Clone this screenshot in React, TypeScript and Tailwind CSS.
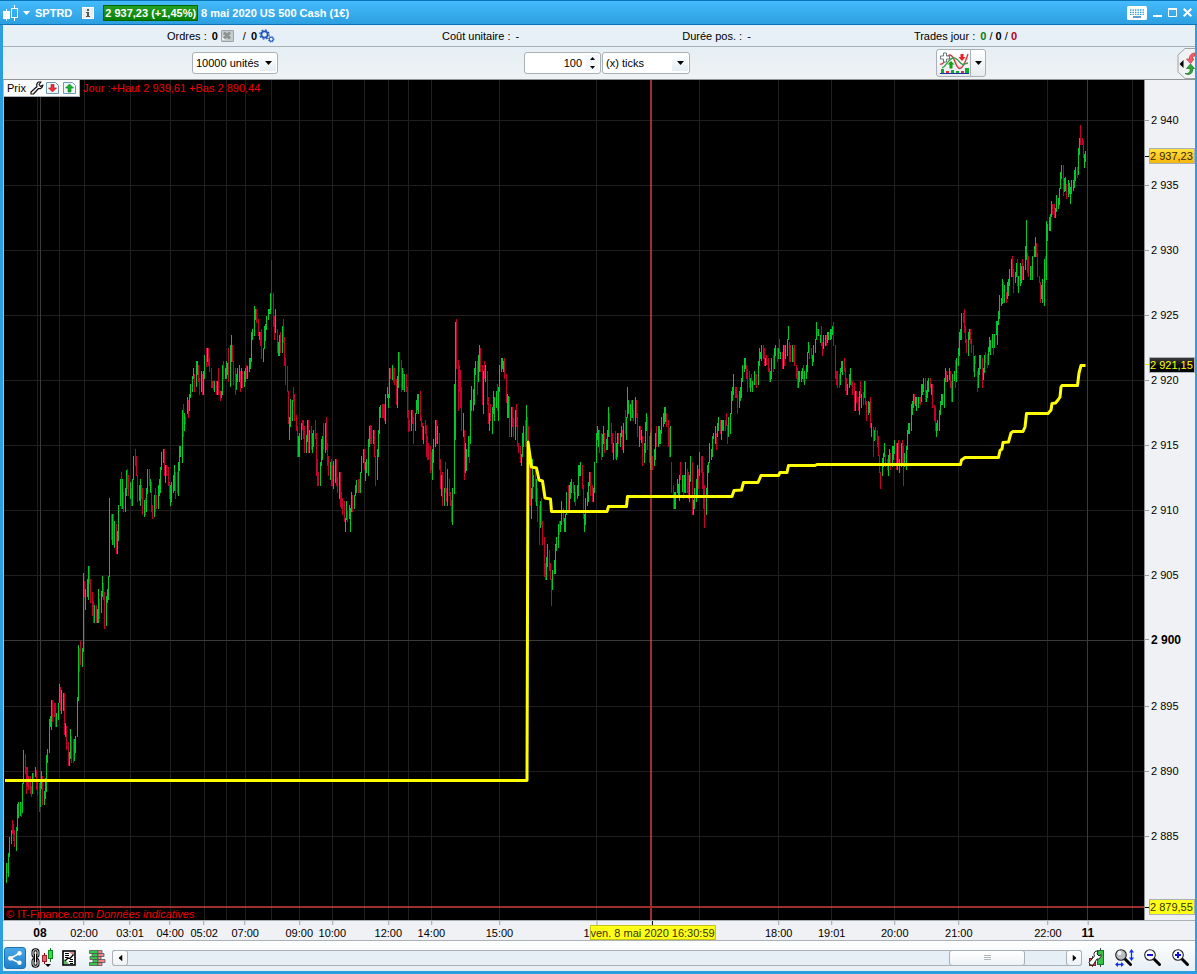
import React from "react";

/* One entry per bar: direction (g = up, r = down) and x, then high and low. */
const BARS = `g6,863,883 r7,863,873 g8,853,877 g9,837,857 g11,830,844 r12,820,834 r13,824,841 r14,830,847 g16,827,851 g17,804,831 g18,802,818 g20,802,816 r21,802,817 g22,783,813 g23,750,784 r25,754,774 r26,767,794 r27,767,787 r28,776,790 r30,776,794 r31,786,797 g32,773,794 r33,773,779 g35,767,777 r36,770,790 r37,782,796 r39,783,812 g40,781,807 g41,771,789 r42,776,805 g44,791,805 g45,778,799 g46,755,792 g47,749,763 g49,719,753 g50,716,727 g51,700,730 r52,700,722 r54,703,717 r55,703,727 g56,713,727 g58,703,720 g59,684,703 r60,687,711 g61,690,714 g63,693,711 r64,693,735 g65,723,737 r66,726,750 r68,742,766 g69,752,766 g70,729,759 r71,736,763 r73,739,763 g74,739,761 g75,736,753 g77,697,737 g78,645,701 r79,648,672 r80,641,665 g82,648,667 g83,573,652 r84,581,597 g85,589,610 g87,579,597 g88,566,600 r89,566,584 r90,579,603 r92,592,616 r93,601,623 g94,605,623 r96,605,623 g97,609,623 g98,589,623 r99,599,619 g101,591,613 g102,576,597 r103,583,600 r104,592,629 g106,596,626 g107,589,603 g108,576,600 g109,498,577 r111,514,540 g112,514,545 r113,514,545 g114,521,548 r116,524,554 g117,531,554 g118,505,541 g120,479,506 r121,472,509 g122,479,509 r123,492,512 g125,488,512 g126,470,496 r127,469,489 r128,475,496 g130,482,499 r131,488,506 g132,479,506 g133,456,480 r135,449,466 r136,456,476 r137,475,502 g139,485,501 g140,479,506 r141,485,499 r142,488,515 g144,500,517 r145,498,515 g146,488,512 g147,469,494 r149,469,486 g150,479,493 r151,482,512 r152,505,519 g154,495,517 r155,488,512 r156,495,509 g158,485,509 g159,479,496 g160,467,493 g161,452,470 g163,449,463 r164,449,476 g165,465,483 r166,465,476 r168,467,486 r169,482,499 g170,485,506 g171,482,502 g173,475,493 g174,465,491 r175,472,499 r177,472,494 g178,462,496 g179,446,471 g180,446,457 g182,410,463 r183,404,437 g184,413,431 r185,417,424 g187,397,414 r188,400,418 g189,394,411 g190,384,398 g192,376,392 g193,368,379 r194,374,392 g196,361,387 g197,361,375 r198,365,382 r199,378,395 g201,371,392 r202,374,395 g203,371,395 g204,355,379 r206,348,367 g207,348,362 r208,348,366 r209,358,372 r211,368,388 r212,381,388 r213,381,390 g214,381,392 r216,381,395 g217,381,395 r218,368,395 r220,391,401 g221,391,398 g222,365,395 r223,361,379 g225,368,379 g226,361,379 g227,363,375 r228,348,382 g230,345,387 g231,335,362 r232,345,362 r233,361,385 r235,368,395 g236,374,390 g237,368,382 g239,365,382 r240,371,392 g241,368,388 r242,371,388 g244,371,387 g245,368,382 r246,365,379 g247,366,379 g249,358,372 g250,358,369 g251,332,362 g252,329,340 g254,306,336 g255,309,320 r256,309,323 r258,319,336 g259,332,340 r260,332,346 r261,329,359 g263,348,362 g264,326,349 g265,324,341 g266,316,330 g268,309,320 g269,309,314 g270,293,314 r271,260,310 r273,293,327 r274,316,340 g275,309,333 r277,329,353 g278,342,356 g279,335,356 r280,332,353 g282,326,353 r283,319,343 r284,337,366 r285,358,385 r287,366,392 r288,391,424 g289,417,440 g290,399,427 g292,400,421 r293,387,402 r294,394,421 r296,415,431 r297,426,457 g298,436,457 g299,433,457 g301,423,440 r302,420,430 r303,420,439 r304,426,453 g306,435,453 g307,420,442 r308,420,453 g309,430,453 r311,426,450 g312,433,453 g313,430,447 r315,420,439 r316,433,476 r317,459,486 r318,472,486 g320,462,486 g321,439,466 g322,436,460 r323,423,449 g325,423,453 r326,417,450 r327,443,466 r328,456,476 g330,462,480 r331,459,486 r332,465,486 g333,461,489 g335,459,483 r336,459,486 r337,477,493 g339,472,499 r340,472,507 r341,492,509 r342,498,515 r344,501,522 g345,518,532 g346,501,520 r347,511,522 g349,505,519 g350,508,532 g351,492,512 r352,495,512 g354,495,509 g355,485,496 g356,480,493 r358,479,493 r359,479,493 g360,472,493 g361,456,473 g363,449,463 r364,449,470 g365,462,481 g366,459,473 g368,439,476 g369,426,447 r370,425,444 r371,426,444 g373,430,444 r374,430,457 r375,456,486 g377,449,480 g378,430,457 g379,407,434 g380,405,418 r382,404,418 r383,404,418 r384,404,421 g385,394,424 g387,387,398 g388,394,408 g389,368,398 r390,368,379 g392,365,380 r393,368,382 r394,368,385 r396,379,405 g397,376,408 g398,352,388 r399,352,372 r401,360,392 g402,368,390 r403,371,390 g404,374,392 r406,374,392 r407,387,418 r408,410,432 r409,420,431 g411,410,431 r412,410,424 r413,417,444 g415,413,431 g416,400,414 g417,394,410 g418,394,414 r420,391,421 r421,417,427 r422,423,440 g423,426,444 r425,420,434 r426,425,457 r427,436,460 r428,443,460 r430,446,473 r431,452,470 g432,449,480 g433,439,463 g435,420,447 r436,420,444 g437,426,444 r439,433,470 r440,459,489 g441,475,496 r442,472,506 g444,488,506 r445,462,493 r446,488,502 g447,469,506 r449,479,496 r450,492,506 r451,500,522 g452,488,525 g454,384,494 g455,322,440 r456,319,369 r458,360,411 r459,365,392 r460,370,408 r461,387,431 g463,413,437 r464,430,480 g465,443,473 g466,449,471 g468,436,457 r469,436,463 g470,400,444 g471,386,411 g473,389,411 g474,368,405 g475,361,375 r477,361,395 g478,355,382 g479,345,372 r480,348,372 r482,365,405 g483,371,414 r484,361,379 g485,365,382 r487,371,405 r488,397,424 g489,413,431 r490,404,421 g492,407,434 g493,391,414 g494,397,421 g496,391,408 r497,384,411 g498,387,421 g499,365,392 g501,358,372 g502,358,369 g503,361,372 r504,358,379 r506,374,403 g507,394,418 g508,396,418 r509,397,437 g511,407,437 r512,407,427 r513,418,437 g515,410,440 r516,404,427 r517,417,447 r518,443,453 r520,446,463 g521,454,466 g522,433,457 g523,426,447 r525,420,447 g526,405,441 r527,417,440 r528,426,441 r530,467,506 g531,488,519 g532,459,499 g533,475,487 r535,470,502 g536,479,506 r537,488,522 r539,505,545 g540,501,528 r541,498,525 r542,521,545 r544,537,577 r545,563,580 g546,557,580 g547,544,567 r549,550,571 r550,563,580 r551,579,606 g552,570,590 g554,560,574 g555,544,574 g556,537,551 g558,524,548 r559,521,535 g560,521,532 g561,501,525 r563,508,522 g564,518,532 g565,514,532 g566,492,515 r568,485,510 g569,485,510 g570,482,499 g571,479,493 r573,482,493 g574,485,502 r575,492,506 g577,485,499 g578,465,496 g579,465,476 g580,462,476 r582,465,489 r583,485,519 g584,514,532 g585,498,525 g587,492,506 g588,482,502 g589,472,486 r590,472,496 r592,485,502 g593,488,502 g594,462,493 g596,433,463 g597,426,440 g598,430,447 r599,430,453 r601,433,460 g602,434,457 g603,426,444 r604,433,453 g606,439,450 g607,430,450 g608,407,437 r609,413,437 r611,423,444 r612,433,453 g613,443,460 r615,431,459 g616,443,460 g617,433,457 r618,433,444 g620,433,447 g621,426,437 r622,430,450 g623,423,453 r625,410,434 g626,417,440 g627,387,418 g628,400,414 g630,404,421 r631,400,418 g632,400,418 r633,410,421 g635,397,424 r636,400,418 r637,413,437 g639,426,447 r640,426,440 g641,430,443 r642,436,466 g644,443,463 g645,422,453 g646,413,431 r647,417,450 r649,436,463 g650,433,470 r651,430,470 r652,456,470 g654,449,466 g655,433,460 r656,426,447 g658,426,447 g659,426,444 g660,430,444 g661,417,434 g663,413,427 g664,407,424 g665,407,422 r666,413,427 r668,420,447 r669,428,457 g670,426,457 r671,462,493 r673,485,509 g674,492,509 g675,492,509 g677,479,493 g678,484,495 g679,475,501 r680,462,480 g682,475,492 r683,475,499 g684,475,493 g685,462,493 r687,469,493 r688,472,499 g689,475,502 g690,456,482 r692,462,515 g693,500,515 g694,488,509 g696,479,502 g697,465,498 r698,469,489 g699,452,476 r701,456,473 r702,456,489 r703,472,509 r704,485,528 g706,488,515 g707,465,495 g708,462,473 g709,443,463 g711,449,460 g712,436,457 g713,433,439 g715,426,444 r716,433,450 g717,423,437 g718,417,431 r720,420,434 g721,420,440 g722,420,431 g723,420,431 r725,420,431 r726,413,426 r727,425,444 g728,417,437 g730,413,434 g731,391,414 g732,387,401 g733,374,395 r735,387,398 r736,387,398 r737,394,414 g739,391,408 g740,387,401 g741,378,398 g742,365,382 g744,358,372 g745,358,369 r746,365,379 r747,369,392 r749,371,388 g750,378,392 r751,374,388 g752,381,392 g754,371,385 r755,374,385 r756,374,388 g758,361,385 g759,348,366 g760,352,359 g761,345,361 r763,345,359 r764,348,366 g765,358,366 r766,355,365 r768,358,372 r769,368,382 g770,371,382 g771,358,379 r773,355,372 g774,348,369 g775,345,356 r777,348,362 g778,348,359 r779,339,353 g780,352,359 r782,352,369 g783,345,369 r784,345,366 g785,345,359 g787,339,356 g788,326,340 r789,342,362 r790,345,362 g792,345,362 r793,348,362 r794,345,366 r796,365,379 r797,368,388 g798,371,388 g799,371,382 g801,371,382 g802,368,379 r803,365,382 g804,371,385 g806,365,379 g807,352,372 g808,342,353 r809,345,359 r811,348,359 g812,355,366 g813,345,362 g815,339,353 g816,322,340 r817,329,336 g818,329,336 g820,335,343 r821,326,346 r822,342,356 g823,335,349 g825,335,346 r826,335,346 g827,332,343 g828,332,340 g830,329,340 g831,329,339 g832,326,335 r833,322,346 r835,345,379 r836,371,385 r837,371,388 r839,374,388 g840,368,385 g841,361,372 g842,361,375 r844,358,372 r845,368,391 r846,378,395 g847,384,395 g849,374,388 g850,368,385 r851,380,386 r852,381,395 r854,383,411 g855,391,411 r856,391,403 r858,397,411 g859,391,415 r860,381,398 g861,394,408 r863,392,405 g864,381,398 r865,381,405 r866,401,421 g868,401,415 g869,402,413 r870,397,428 g871,423,437 r873,427,457 g874,430,441 r875,427,440 r877,430,447 r878,436,456 r879,455,473 r880,472,489 g882,458,476 g883,453,467 g884,443,457 r885,455,467 r887,459,470 g888,455,476 g889,449,466 r890,453,470 g892,446,467 g893,446,460 g894,440,454 r896,443,470 g897,443,470 r898,440,464 g899,459,473 g901,443,467 r902,440,463 r903,446,486 g904,453,467 g906,446,470 g907,430,450 g908,423,434 g909,423,434 g911,404,431 g912,401,415 g913,394,408 r914,394,404 g915,397,406 g916,397,411 g918,397,408 r919,397,404 r920,397,405 g921,384,402 g922,384,395 g923,378,392 r925,378,402 g926,390,402 g927,381,398 g928,378,392 r930,378,388 g931,384,395 r932,384,408 r934,405,421 r935,407,431 g936,423,437 g937,420,431 g939,410,431 g940,401,415 g941,394,405 g942,394,405 g944,378,408 g945,368,382 r946,371,382 g947,375,382 g949,368,380 r950,371,388 r951,381,402 g952,374,402 g954,371,381 r955,360,388 g956,358,382 g958,348,366 g959,332,356 g960,329,340 g961,313,340 r963,313,323 r964,309,333 r965,326,343 r966,339,353 g968,332,356 g969,329,340 r970,329,344 r971,339,353 r973,345,372 g974,356,377 r975,355,364 r977,371,392 g978,368,388 g979,355,375 g980,355,369 r982,358,388 g983,368,380 g984,355,373 r985,352,363 r987,354,368 g988,347,365 g989,337,352 g990,340,355 g992,334,348 r993,334,355 g994,334,348 g996,321,335 g997,321,345 g998,311,325 g999,295,319 g1001,298,306 g1002,279,304 r1003,282,303 g1004,285,303 r1006,292,303 g1007,282,299 g1008,279,296 g1009,269,286 g1011,259,277 r1012,256,277 r1013,269,293 g1015,272,283 g1016,263,277 r1017,259,286 g1018,276,293 g1020,263,286 g1021,266,283 r1022,259,280 g1023,266,280 g1025,246,270 g1026,220,260 r1027,253,273 r1028,256,277 g1030,266,280 r1031,266,280 g1032,256,280 g1034,246,257 g1035,237,257 r1036,243,257 r1037,253,277 r1039,276,283 r1040,282,303 g1041,285,299 g1042,279,303 g1044,259,306 r1045,256,283 g1046,221,280 g1047,224,241 g1049,217,231 g1050,214,231 g1051,201,217 r1052,204,215 r1054,204,218 g1055,208,218 g1056,195,212 g1058,198,209 g1059,188,205 g1060,172,189 g1061,165,179 r1063,165,196 g1064,178,192 g1065,177,191 r1066,184,199 g1068,180,197 g1069,183,194 g1070,187,204 g1071,180,194 g1073,180,191 g1074,170,188 g1075,167,181 r1077,167,178 g1078,148,175 g1079,138,155 r1080,125,145 r1082,138,145 r1083,141,158 g1084,154,168 g1085,151,162`;

const PLOT = { left: 4, top: 80, width: 1140, height: 840 };

function barPath(kind: string): string {
  return BARS.split(" ")
    .filter((b) => b[0] === kind)
    .map((b) => {
      const [x, hi, lo] = b.slice(1).split(",").map(Number);
      return `M${x + 0.5} ${hi}V${lo}`;
    })
    .join("");
}
const UP = barPath("g");
const DOWN = barPath("r");

const INDICATOR =
  "M5 780.5L527 780.5L528 442L531.5 467L536.5 468L539 480L542.5 481L545 498L550.5 499L551.5 511.5L607 511.5L608.5 506.5L626.5 506.5L627.5 496.5L732 496.5L734 490.5L741.5 490L743.5 482.5L758 482.5L761 475.5L778.5 475.5L780 472.5L787 472.5L788.5 465.5L815 465.5L817 464.5L960.5 464.5L961.5 460L965 457.5L998.5 457.5L1000 450.5L1002 449L1003 442.5L1008.5 442L1011 433L1013 431.5L1023 431.5L1025 427L1026.5 413.5L1048 413.5L1051 410L1052 403.5L1055.5 403L1058 400L1060 397L1061 387L1062 385.5L1077.5 385.5L1079 373L1081 365.5L1085.5 365.5";

const GRID_X = [37, 59, 84, 130, 170, 204, 226, 245, 271, 299, 332, 364, 388, 408, 431, 499, 596, 699, 778, 831, 894, 958, 1047, 1132];
const GRID_Y = [120, 185, 250, 315, 380, 445, 510, 575, 706, 771, 836];

const PRICES = [
  { y: 120, t: "2 940" },
  { y: 185, t: "2 935" },
  { y: 250, t: "2 930" },
  { y: 315, t: "2 925" },
  { y: 380, t: "2 920" },
  { y: 445, t: "2 915" },
  { y: 510, t: "2 910" },
  { y: 575, t: "2 905" },
  { y: 640, t: "2 900", strong: true },
  { y: 706, t: "2 895" },
  { y: 771, t: "2 890" },
  { y: 836, t: "2 885" },
];

const BADGES = [
  { y: 156, t: "2 937,23", box: "bg-linear-to-b from-[#ffe23a] to-[#f5b60a] text-[#3a2600]", tick: "bg-black" },
  { y: 365, t: "2 921,15", box: "bg-linear-to-b from-[#3c3c3c] to-black text-[#ffff00]", tick: "bg-[#f0e800]" },
  { y: 907, t: "2 879,55", box: "bg-[#ffff1a] text-[#333300]", tick: "bg-black" },
];

const TIMES = [
  { x: 40, t: "08", strong: true },
  { x: 84, t: "02:00" },
  { x: 130, t: "03:01" },
  { x: 170, t: "04:00" },
  { x: 204, t: "05:02" },
  { x: 245, t: "07:00" },
  { x: 299, t: "09:00" },
  { x: 332, t: "10:00" },
  { x: 388, t: "12:00" },
  { x: 431, t: "14:00" },
  { x: 499, t: "15:00" },
  { x: 586, t: "1", bare: true },
  { x: 596, t: "" },
  { x: 778, t: "18:00" },
  { x: 831, t: "19:01" },
  { x: 894, t: "20:00" },
  { x: 958, t: "21:00" },
  { x: 1047, t: "22:00" },
  { x: 1087, t: "11", strong: true },
];

const fromLeft = (x: number) => `${((x - PLOT.left) / PLOT.width) * 100}%`;
const fromTop = (y: number) => `${((y - PLOT.top) / PLOT.height) * 100}%`;

function Caret({ className = "" }: { className?: string }) {
  return (
    <svg className={`h-[4px] w-[7px] ${className}`} viewBox="0 0 7 4" aria-hidden="true">
      <path d="M0 0H7L3.5 4Z" fill="currentColor" />
    </svg>
  );
}

function TitleBar() {
  return (
    <header className="flex h-[25px] shrink-0 items-center border-y border-t-[#0875bb] border-b-[#0875bb] bg-linear-to-b from-[#45bbfb] to-[#2b9fe0] pr-[5px] text-white">
      <svg className="ml-[3px] h-[16px] w-[16px]" viewBox="0 0 16 16" aria-hidden="true">
        <path d="M3.500 4V15.500" stroke="#fff" />
        <rect x="0" y="6" width="7" height="8" fill="#fff" />
        <path d="M11.500 0V3M11.500 13V16" stroke="#fff" />
        <rect x="8.500" y="3.500" width="6" height="9" fill="none" stroke="#fff" />
      </svg>
      <button type="button" aria-label="Menu" className="ml-[4px] flex w-[7px] items-center">
        <Caret />
      </button>
      <h1 className="ml-[5px] text-[11px] font-bold">SPTRD</h1>
      <button type="button" aria-label="Informations" className="ml-[10px] flex h-[12px] w-[12px] items-center justify-center border border-white bg-[#e9eef1]">
        <svg className="h-[8px] w-[6px]" viewBox="0 0 6 8" aria-hidden="true">
          <path d="M2 0H4V2H2ZM1 3H4V7H5V8H1V7H2V4H1Z" fill="#555" />
        </svg>
      </button>
      <span className="ml-[9px] flex h-[16px] items-center border border-[#006400] bg-linear-to-b from-[#22a022] to-[#078007] px-px text-[11px] font-bold whitespace-nowrap">
        2 937,23 (+1,45%)
      </span>
      <span className="ml-[3px] text-[11px] font-bold whitespace-nowrap">8 mai 2020 US 500 Cash (1€)</span>
      <div className="ml-auto flex items-center">
        <button type="button" aria-label="Clavier" className="mt-px flex">
          <svg className="h-[14px] w-[20px]" viewBox="0 0 20 14" aria-hidden="true">
            <rect width="20" height="14" rx="1.500" fill="#fff" />
            <path d="M3 4H17M3 6.500H17" stroke="#2b9fe0" strokeWidth="1.400" strokeDasharray="1.400 1.100" />
            <path d="M3 8.500H17" stroke="#2b9fe0" strokeWidth="1" strokeDasharray="1.400 1.100" />
            <path d="M6 11H14" stroke="#2b7fc0" strokeWidth="1.500" />
          </svg>
        </button>
        <button type="button" aria-label="Réduire" className="ml-[6px] flex">
          <svg className="h-[10px] w-[9px]" viewBox="0 0 9 10" aria-hidden="true">
            <path d="M0 8H9" stroke="#fff" strokeWidth="2" />
          </svg>
        </button>
        <button type="button" aria-label="Agrandir" className="ml-[6px] flex">
          <svg className="h-[10px] w-[9px]" viewBox="0 0 9 10" aria-hidden="true">
            <path d="M.5 1.500V8.500H8.500V1.500" stroke="#fff" fill="none" />
            <path d="M0 1H9" stroke="#fff" strokeWidth="2" />
          </svg>
        </button>
        <button type="button" aria-label="Fermer" className="ml-[6px] flex">
          <svg className="h-[9px] w-[9px]" viewBox="0 0 9 9" aria-hidden="true">
            <path d="M.7.7L8.300 8.300M8.300.7L.7 8.300" stroke="#fff" strokeWidth="2" />
          </svg>
        </button>
      </div>
    </header>
  );
}

function Gear({ cx, cy, r }: { cx: number; cy: number; r: number }) {
  return (
    <g fill="none" stroke="#1d56b8">
      <circle cx={cx} cy={cy} r={r} strokeWidth={r * 0.55} />
      <circle cx={cx} cy={cy} r={r * 1.45} strokeWidth={r * 0.4} strokeDasharray={`${r * 0.57} ${r * 0.569}`} />
    </g>
  );
}

function StatusRow() {
  return (
    <div className="flex h-[22px] shrink-0 items-center justify-between border-b border-[#a9b0b6] bg-[#e8f0f7] pr-[178px] pl-[164px] whitespace-nowrap">
      <div className="flex items-center pr-[4px]">
        <span>Ordres :</span>
        <b className="ml-[5px]">0</b>
        <button type="button" aria-label="Annuler les ordres" className="ml-[3px] flex h-[12px] w-[13px] items-center justify-center rounded-[1px] border border-[#9da3a7] bg-[#c6caca]">
          <svg className="h-[9px] w-[10px]" viewBox="0 0 10 9" aria-hidden="true">
            <path d="M2 1.500L8 7.500M8 1.500L2 7.500" stroke="#8b9092" strokeWidth="2.600" />
            <path d="M0 9V6L4 9Z" fill="#eee" />
          </svg>
        </button>
        <span className="ml-[9px]">/</span>
        <b className="ml-[5px]">0</b>
        <button type="button" aria-label="Réglages des ordres" className="ml-[2px] flex">
          <svg className="h-[14px] w-[16px]" viewBox="0 0 16 14" aria-hidden="true">
            <Gear cx={5.5} cy={5.5} r={3.2} />
            <Gear cx={12.2} cy={10.2} r={2} />
          </svg>
        </button>
      </div>
      <div>
        Coût unitaire : <span className="ml-[2px]">-</span>
      </div>
      <div>
        Durée pos. : <span className="ml-[2px]">-</span>
      </div>
      <div>
        Trades jour : <b className="ml-[2px] text-[#0c7a12]">0</b> / <b>0</b> / <b className="text-[#b00020]">0</b>
      </div>
    </div>
  );
}

const FIELD = "h-[22px] rounded-[3px] border border-[#a9b0b6] bg-white text-[11px] text-black outline-none";

function Select({ label, value, width }: { label: string; value: string; width: string }) {
  return (
    <span className={`relative flex ${width}`}>
      <select aria-label={label} defaultValue={value} className={`${FIELD} w-full appearance-none pl-[3px]`}>
        <option>{value}</option>
      </select>
      <span className="pointer-events-none absolute top-[3px] right-[2px] flex h-[16px] w-[16px] items-center justify-center bg-linear-to-b from-white to-[#e4edf3]">
        <Caret />
      </span>
    </span>
  );
}

function SettingsRow() {
  return (
    <div className="flex h-[33px] shrink-0 items-center border-b border-[#8f9496] bg-linear-to-b from-[#e5eff5] to-[#f0f1f3]">
      <div className="flex flex-1 items-center justify-between pr-[191px] pl-[189px]">
        <Select label="Nombre d'unités" value="10000 unités" width="w-[86px]" />
        <div className="flex gap-px">
          <span className="relative flex w-[77px]">
            <input aria-label="Nombre de ticks" type="text" defaultValue="100" className={`${FIELD} w-full pr-[18px] text-right`} />
            <span className="absolute top-[3px] right-[2px] flex h-[16px] w-[14px] flex-col items-center justify-between bg-[#f4f8fa] py-[2px]">
              <button type="button" aria-label="Augmenter" className="flex">
                <svg className="h-[3px] w-[5px]" viewBox="0 0 5 3" aria-hidden="true">
                  <path d="M0 3H5L2.500 0Z" />
                </svg>
              </button>
              <button type="button" aria-label="Diminuer" className="flex">
                <svg className="h-[3px] w-[5px]" viewBox="0 0 5 3" aria-hidden="true">
                  <path d="M0 0H5L2.500 3Z" />
                </svg>
              </button>
            </span>
          </span>
          <Select label="Unité de temps" value="(x) ticks" width="w-[88px]" />
        </div>
        <div className="flex h-[28px] w-[50px] overflow-hidden rounded-[3px] border border-[#a9b0b6] bg-linear-to-b from-white to-[#e8ecef]">
          <button type="button" aria-label="Ajouter un indicateur" className="flex flex-1 items-center justify-center border-r border-[#a9b0b6]">
            <svg className="h-[24px] w-[30px]" viewBox="0 0 30 24" aria-hidden="true">
              <path d="M2 14C7 14 7 5 13 5C18 5 17 15 21 15C25 15 25 10 29 9L29 4C24 13 22 19 19 17C14 14 15 2 10 5C7 7 5 16 2 14Z" fill="#f5cfcf" />
              <path d="M1 13C6 15 7 4 11 4C16 4 16 18 21 17.500C25 17 27 8 29 3" fill="none" stroke="#c33c46" strokeWidth="1.300" />
              <path d="M3 17C8 15 9 8 14 7C19 6 21 14 24 13.500C27 13 27 12 29 12" fill="none" stroke="#3c9a45" strokeWidth="1.300" />
              <path d="M4.500 2H7.500V5H10.500V8H7.500V11H4.500V8H1.500V5H4.500Z" fill="#fff" stroke="#6b787c" />
              <path d="M21.500 3H24.500V6H26.500L23 10L19.500 6H21.500Z" fill="#ee2020" />
              <path d="M10.500 17.500V13.500H8.500L12 10L15.500 13.500H13.500V17.500Z" fill="#12a012" />
              <path d="M2 18H5V22H2ZM12 19H15V22H12ZM17 20H20V22H17ZM26 17H30V22H26Z" fill="#12a830" />
              <path d="M7 20H10V22H7ZM22 20H25V22H22Z" fill="#e03038" />
              <path d="M1 22.500H30" stroke="#2030a0" strokeWidth="1" />
            </svg>
          </button>
          <button type="button" aria-label="Liste des indicateurs" className="flex w-[14px] items-center justify-center">
            <Caret />
          </button>
        </div>
      </div>
      <button type="button" aria-label="Panneau latéral" className="flex">
        <svg className="h-[31px] w-[18px]" viewBox="0 0 18 31" aria-hidden="true">
          <path d="M18 .5H8L1 7V24L8 30.500H18" fill="#f0f2f4" stroke="#9da3a7" />
          <path d="M2.500 16L6.500 12V20Z" fill="#000" />
          <path d="M18 5C14 5 12 8 12.500 11H9.500L13.500 15.500L17 11H15.500C15.500 9 16 8 18 8Z" fill="#f06068" stroke="#d02830" strokeWidth=".7" />
          <path d="M8 25.500C12 26 13.500 24 13 20.500H9.500L13.500 16L17.500 20.500H15.800C16 25 13 28 8 25.500Z" fill="#30a838" stroke="#107018" strokeWidth=".7" />
        </svg>
      </button>
    </div>
  );
}

function PageIcon({ up }: { up?: boolean }) {
  return (
    <svg className="h-[12px] w-[13px]" viewBox="0 0 13 12" aria-hidden="true">
      <path d="M.5.5H9.500L12.500 3.500V11.500H.5Z" fill="#edf5fa" stroke="#6c9ab8" />
      {up ? (
        <path d="M6.500 2L10.500 6H8V10H5V6H2.500Z" fill="#18b030" stroke="#0b7a1c" strokeWidth=".6" />
      ) : (
        <path d="M6.500 10L2.500 6H5V2.500H8V6H10.500Z" fill="#ee3038" stroke="#a81018" strokeWidth=".6" />
      )}
    </svg>
  );
}

function Plot() {
  return (
    <div className="relative min-w-0 flex-1 border-r border-l border-r-[#8f9496] border-l-[#b9c0c4] bg-black">
      <svg className="absolute inset-0 h-full w-full" viewBox="4 80 1140 840" preserveAspectRatio="none" role="img" aria-label="Cours US 500 Cash">
        <g shapeRendering="crispEdges" fill="none">
          <path d={GRID_X.map((x) => `M${x + 0.5} 80V920`).join("") + GRID_Y.map((y) => `M4 ${y + 0.5}H1144`).join("")} stroke="#1f1f1f" />
          <path d="M40.500 80V920M1087.500 80V920M4 640.500H1144" stroke="#3a3a3a" />
          <path d={UP} stroke="#00c82d" />
          <path d={DOWN} stroke="#c8002f" />
          <path d="M651 80V920M4 907H1144" stroke="#ff4b4b" strokeOpacity=".62" strokeWidth="2" />
        </g>
        <path d={INDICATOR} fill="none" stroke="#ffff00" strokeWidth="3" strokeLinejoin="round" />
      </svg>
      <div className="absolute top-0 left-0 flex h-[17px] items-center border-r border-b border-[#a9b0b6] bg-[#fbfcfc] pr-[3px] pl-[3px]">
        <span>Prix</span>
        <button type="button" aria-label="Réglages du prix" className="ml-[4px] flex">
          <svg className="h-[14px] w-[14px]" viewBox="0 0 14 14" aria-hidden="true">
            <path d="M8.500 1C6.500 2 6.500 4.500 7 5.500L1 11L1 13H3.500L8.500 7.500C10.500 8.200 12.500 6.500 13 4L10.500 5.500L9 3.500L11 1Z" fill="#fff" stroke="#111" strokeWidth="1.200" strokeLinejoin="round" />
          </svg>
        </button>
        <button type="button" aria-label="Vendre" className="ml-[2px] flex">
          <PageIcon />
        </button>
        <button type="button" aria-label="Acheter" className="ml-[4px] flex">
          <PageIcon up />
        </button>
      </div>
      <p className="absolute top-[1px] left-[79px] leading-[15px] whitespace-nowrap text-[#f00000]">Jour :+Haut 2 939,61 +Bas 2 890,44</p>
      <p className="absolute bottom-[-1px] left-[2px] leading-[13px] whitespace-nowrap text-[#f00000]">
        © IT-Finance.com <i>Données indicatives</i>
      </p>
    </div>
  );
}

function PriceAxis() {
  return (
    <div className="relative w-[50px] shrink-0 bg-[#f0f1f4]">
      {PRICES.map((p) => (
        <div key={p.t} className="absolute left-0 flex h-[14px] -translate-y-1/2 items-center whitespace-nowrap" style={{ top: fromTop(p.y) }}>
          <span className="h-px w-[4px] bg-[#9da3a7]" />
          <span className={p.strong ? "ml-[2px] text-[12px] leading-[14px] font-bold" : "ml-[2px] leading-[14px]"}>{p.t}</span>
        </div>
      ))}
      {BADGES.map((b) => (
        <div key={b.t} className="absolute left-0 flex h-[16px] -translate-y-1/2 items-center whitespace-nowrap" style={{ top: fromTop(b.y) }}>
          <span className={`h-px w-[4px] ${b.tick}`} />
          <span className={`flex h-[16px] w-[46px] items-center border border-[#a9b0b6] ${b.box}`}>{b.t}</span>
        </div>
      ))}
    </div>
  );
}

function TimeAxis() {
  return (
    <div className="flex h-[21px] shrink-0 border-y border-t-[#a9b0b6] border-b-[#a9b0b6] bg-[#f0f1f4]">
      <div className="relative ml-px flex-1">
        {TIMES.map((t) => (
          <div key={t.x} className="absolute top-0 flex -translate-x-1/2 flex-col items-center whitespace-nowrap" style={{ left: fromLeft(t.x) }}>
            <span className={t.bare ? "h-[4px] w-px" : "h-[4px] w-px bg-[#9da3a7]"} />
            <span className={t.strong ? "mt-px text-[12px] leading-[14px] font-bold" : "mt-px leading-[14px]"}>{t.t}</span>
          </div>
        ))}
        <div className="absolute top-0 flex -translate-x-1/2 flex-col items-center whitespace-nowrap" style={{ left: fromLeft(652) }}>
          <span className="h-[4px] w-px bg-black" />
          <span className="flex h-[15px] items-center border border-[#c4c41a] bg-[#ffff1a] text-[#333300]">ven. 8 mai 2020 16:30:59</span>
        </div>
      </div>
      <div className="w-[50px] shrink-0" />
    </div>
  );
}

function Magnifier({ sign }: { sign: "minus" | "plus" | "fit" }) {
  return (
    <svg className="h-[18px] w-[19px]" viewBox="0 0 19 18" aria-hidden="true">
      <path d="M9 9L15.500 15.500" stroke="#000" strokeWidth="3" strokeLinecap="round" />
      <circle cx="6" cy="6" r="5.300" fill={sign === "fit" ? "#b9bdc0" : "#fff"} stroke="#222" strokeWidth="1.100" />
      {sign === "fit" ? (
        <>
          <circle cx="4.500" cy="4" r="2.200" fill="#fff" opacity=".8" />
          <path d="M1 15.500H8M16.500 2V10" stroke="#1230e8" strokeWidth="1.300" />
          <path d="M0 15.500L3 13V18ZM9 15.500L6 13V18ZM16.500 0L14 3.500H19ZM16.500 12L14 8.500H19Z" fill="#1230e8" />
        </>
      ) : (
        <path d={sign === "plus" ? "M3 6H9M6 3V9" : "M3 6H9"} stroke="#1010d8" strokeWidth="2" />
      )}
    </svg>
  );
}

const ARROW_BTN = "flex w-[16px] shrink-0 items-center justify-center rounded-[3px] border border-[#a9b0b6] bg-linear-to-b from-white to-[#eef2f5]";

function BottomBar() {
  return (
    <footer className="flex h-[30px] shrink-0 items-center bg-linear-to-b from-white to-[#e6eff5] pt-[3px] pr-[4px] pl-[1px]">
      <button type="button" aria-label="Partager" className="flex h-[22px] w-[22px] items-center justify-center rounded-[3px] border border-[#1b73b5] bg-linear-to-b from-[#48a8e8] to-[#1f80c8]">
        <svg className="h-[14px] w-[14px]" viewBox="0 0 14 14" aria-hidden="true">
          <path d="M12 2L2 7.500L12 12" fill="none" stroke="#fff" strokeWidth="1.500" />
          <circle cx="11.500" cy="2.300" r="2.200" fill="#fff" />
          <circle cx="2.500" cy="7.300" r="2.400" fill="#fff" />
          <circle cx="11.500" cy="11.800" r="2.200" fill="#fff" />
        </svg>
      </button>
      <button type="button" aria-label="Lier les graphiques" className="ml-[5px] flex">
        <svg className="h-[20px] w-[23px]" viewBox="0 0 23 20" aria-hidden="true">
          <g fill="none">
            <path d="M2 7V4C2 1 7 1 7 4V7C7 9 2 9 2 7ZM2 16V13C2 10.500 7 10.500 7 13V16C7 19 2 19 2 16Z" stroke="#000" strokeWidth="3" />
            <path d="M2 7V4C2 1 7 1 7 4V7C7 9 2 9 2 7ZM2 16V13C2 10.500 7 10.500 7 13V16C7 19 2 19 2 16Z" stroke="#fff" strokeWidth="1" />
            <path d="M4.500 6V14" stroke="#000" strokeWidth="3" />
            <path d="M4.500 6V14" stroke="#fff" strokeWidth="1" />
          </g>
          <path d="M13.500 5V16" stroke="#900" />
          <rect x="11.500" y="7.500" width="4" height="6" fill="#e86068" stroke="#a02030" />
          <path d="M19.500 0V14" stroke="#0a7a1a" />
          <rect x="17.500" y="2.500" width="4" height="8" fill="#38d848" stroke="#0a8a1a" />
          <path d="M14 16H20L17 19Z" fill="#000" />
        </svg>
      </button>
      <button type="button" aria-label="Liste" className="ml-[8px] flex">
        <svg className="h-[16px] w-[14px]" viewBox="0 0 14 16" aria-hidden="true">
          <rect x="1" y="1" width="12" height="14" fill="#fff" stroke="#000" strokeWidth="1.600" />
          <path d="M7 2H12V6Z" fill="#d88" />
          <path d="M2 14V9L7 14Z" fill="#5cb868" />
          <path d="M3 3.500H7M3 5.500H7M7 11.500H11M8 13.500H11" stroke="#000" />
          <path d="M3 11L6 8L8 8.500L11.500 4.500" fill="none" stroke="#000" strokeWidth="1.300" />
          <path d="M3 7.500H6M8 9.500H11" stroke="#000" />
        </svg>
      </button>
      <button type="button" aria-label="Carnet d'ordres" className="ml-[13px] flex">
        <svg className="h-[16px] w-[17px]" viewBox="0 0 17 16" aria-hidden="true">
          <g stroke="#555" strokeWidth=".8">
            <path d="M.5.5H9V3.500H.5ZM3 3.500H9V6.500H3ZM1 6.500H9V9.500H1ZM4 9.500H9V12.500H4ZM.5 12.500H9V15.500H.5Z" fill="#34c848" />
            <path d="M9 .5H13V3.500H9ZM9 3.500H15V6.500H9ZM9 6.500H12V9.500H9ZM9 9.500H16V12.500H9ZM9 12.500H13V15.500H9Z" fill="#f08488" />
          </g>
        </svg>
      </button>
      <div className="ml-[6px] flex h-[16px] flex-1 rounded-[3px] border-y border-[#a9b0b6] bg-[#e6eff6]">
        <button type="button" aria-label="Défiler à gauche" className={`${ARROW_BTN} -my-px`}>
          <Caret className="rotate-90" />
        </button>
        <div className="flex-1" />
        <div className="-my-px flex w-[76px] flex-col items-center justify-center gap-px rounded-[3px] border border-[#a9b0b6] bg-linear-to-b from-white to-[#eef2f5]">
          <span className="h-px w-[7px] bg-[#b0b5b8]" />
          <span className="h-px w-[7px] bg-[#b0b5b8]" />
          <span className="h-px w-[7px] bg-[#b0b5b8]" />
        </div>
        <div className="w-[41px]" />
        <button type="button" aria-label="Défiler à droite" className={`${ARROW_BTN} -my-px`}>
          <Caret className="-rotate-90" />
        </button>
      </div>
      <button type="button" aria-label="Réglages du graphique" className="ml-[6px] flex">
        <svg className="h-[19px] w-[17px]" viewBox="0 0 17 19" aria-hidden="true">
          <path d="M4.500 8V19M12.500 0V19" stroke="#444" />
          <rect x="1.500" y="10.500" width="6" height="7" fill="#d84850" stroke="#802028" />
          <rect x="9.500" y="2.500" width="6" height="14" fill="#38c048" stroke="#107a20" />
          <path d="M8 3C6 4 5.500 6.500 6.500 8L1 14.500L2.500 17H5L9 11C11.500 11.500 13.500 9 13 6.500L11 8L9 6L10 3.500Z" fill="#fff" stroke="#222" strokeLinejoin="round" />
        </svg>
      </button>
      <button type="button" aria-label="Zoom ajusté" className="ml-[10px] flex">
        <Magnifier sign="fit" />
      </button>
      <button type="button" aria-label="Zoom arrière" className="ml-[10px] flex">
        <Magnifier sign="minus" />
      </button>
      <button type="button" aria-label="Zoom avant" className="ml-[9px] flex">
        <Magnifier sign="plus" />
      </button>
    </footer>
  );
}

export default function App() {
  return (
    <main className="flex h-screen min-h-[420px] min-w-[900px] flex-col bg-[#2b9fe0] font-['Liberation_Sans',Arial,sans-serif] text-[11px] leading-[14px] text-black">
      <TitleBar />
      <div className="flex min-h-0 flex-1 flex-col border-r-2 border-b-[3px] border-l-[3px] border-[#2b9fe0]">
        <StatusRow />
        <SettingsRow />
        <div className="flex min-h-0 flex-1">
          <Plot />
          <PriceAxis />
        </div>
        <TimeAxis />
        <BottomBar />
      </div>
    </main>
  );
}
